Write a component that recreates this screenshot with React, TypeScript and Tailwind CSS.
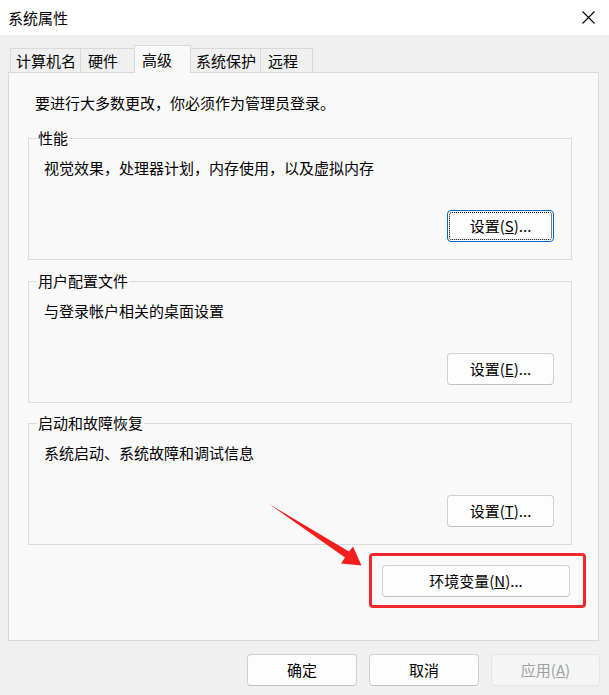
import React from "react";

const font = { fontFamily: '"Noto Sans CJK SC", "Microsoft YaHei", sans-serif' };

function Btn({
  children,
  focused,
  disabled,
  className = "",
}: {
  children: React.ReactNode;
  focused?: boolean;
  disabled?: boolean;
  className?: string;
}) {
  const base =
    "relative flex items-center justify-center rounded-[4px] border text-[15px] leading-[20px]";
  const look = disabled
    ? "bg-[#f5f5f5] border-[#e5e5e5] text-[#a0a0a0]"
    : focused
    ? "bg-[#fdfdfd] border-[#0067c0] text-black"
    : "bg-[#fdfdfd] border-[#d0d0d0] border-b-[#c0c0c0] text-black";
  return (
    <div className={`${base} ${look} ${className}`}>
      {focused && (
        <div className="absolute inset-[1px] rounded-[3px] border border-dotted border-black" />
      )}
      <span>{children}</span>
    </div>
  );
}

function Group({
  title,
  text,
  btn,
  focused,
  className = "",
}: {
  title: string;
  text: string;
  btn: React.ReactNode;
  focused?: boolean;
  className?: string;
}) {
  return (
    <fieldset
      className={`ml-[19px] w-[544px] border border-[#dcdcdc] pb-[17px] ${className}`}
    >
      <legend className="ml-[8px] px-[1px] text-[15px] leading-[20px] text-black">
        {title}
      </legend>
      <p className="mt-[10px] pl-[15px] text-[15px] leading-[20px] text-black">{text}</p>
      <div className="mt-[32px] flex justify-end pr-[17px]">
        <Btn focused={focused} className="h-[32px] w-[107px]">
          {btn}
        </Btn>
      </div>
    </fieldset>
  );
}

const tabs = [
  { label: "计算机名", w: "w-[71px]", pl: "pl-[5px]" },
  { label: "硬件", w: "w-[55px]", pl: "pl-[7px]" },
  { label: "高级", w: "w-[57px]", pl: "pl-[7px]", active: true },
  { label: "系统保护", w: "w-[71px]", pl: "pl-[5px]" },
  { label: "远程", w: "w-[53px]", pl: "pl-[7px]" },
];

export default function App() {
  return (
    <div
      className="relative h-[695px] w-[609px] overflow-hidden bg-[#f0f0f0] text-black"
      style={font}
    >
      {/* title bar */}
      <div className="flex h-[35px] items-center justify-between bg-white pl-[8px] pr-[14px]">
        <span className="text-[15px] leading-[20px]">系统属性</span>
        <svg width="13" height="13" viewBox="0 0 13 13">
          <path d="M0.5 0.5 L12.5 12.5 M12.5 0.5 L0.5 12.5" stroke="#000" strokeWidth="1.1" />
        </svg>
      </div>

      {/* tabs */}
      <div className="mt-[10px] flex h-[27px] items-end pl-[10px]">
        {tabs.map((t, i) => (
          <div
            key={t.label}
            className={`${t.w} ${t.pl} ${i > 0 ? "-ml-[1px]" : ""} flex items-center border-x border-t border-[#d9d9d9] text-[15px] leading-[20px] ${
              t.active
                ? "relative z-10 -mb-[1px] h-[28px] bg-[#f9f9f9]"
                : "h-[24px] bg-[#f0f0f0]"
            }`}
          >
            {t.label}
          </div>
        ))}
      </div>

      {/* panel */}
      <div className="ml-[8px] flex h-[569px] w-[591px] flex-col border border-[#d9d9d9] bg-[#f9f9f9]">
        <p className="mt-[20px] pl-[26px] text-[15px] leading-[20px]">
          要进行大多数更改，你必须作为管理员登录。
        </p>
        <Group
          className="mt-[15px]"
          title="性能"
          text="视觉效果，处理器计划，内存使用，以及虚拟内存"
          focused
          btn={
            <>
              设置(<u>S</u>)...
            </>
          }
        />
        <Group
          className="mt-[11px]"
          title="用户配置文件"
          text="与登录帐户相关的桌面设置"
          btn={
            <>
              设置(<u>E</u>)...
            </>
          }
        />
        <Group
          className="mt-[10px]"
          title="启动和故障恢复"
          text="系统启动、系统故障和调试信息"
          btn={
            <>
              设置(<u>T</u>)...
            </>
          }
        />
        <div className="mt-[8px] flex justify-end pr-[12px]">
          <div className="rounded-[4px] border-[3px] border-[#f0272a] pb-[8px] pl-[10px] pr-[13px] pt-[9px]">
            <Btn className="h-[32px] w-[188px]">
              环境变量(<u>N</u>)...
            </Btn>
          </div>
        </div>
      </div>

      {/* bottom buttons */}
      <div className="mt-[13px] flex justify-end gap-[12px] pr-[9px]">
        <Btn className="h-[32px] w-[110px]">确定</Btn>
        <Btn className="h-[32px] w-[110px]">取消</Btn>
        <Btn disabled className="h-[32px] w-[109px]">
          应用(<u>A</u>)
        </Btn>
      </div>

      {/* annotation arrow */}
      <svg
        className="pointer-events-none absolute left-0 top-0"
        width="609"
        height="695"
        viewBox="0 0 609 695"
      >
        <polygon
          points="269,504 349,551.5 353,546.5 361.5,565.5 341,563.5 345,557.5"
          fill="#f41f1c"
        />
      </svg>
    </div>
  );
}
